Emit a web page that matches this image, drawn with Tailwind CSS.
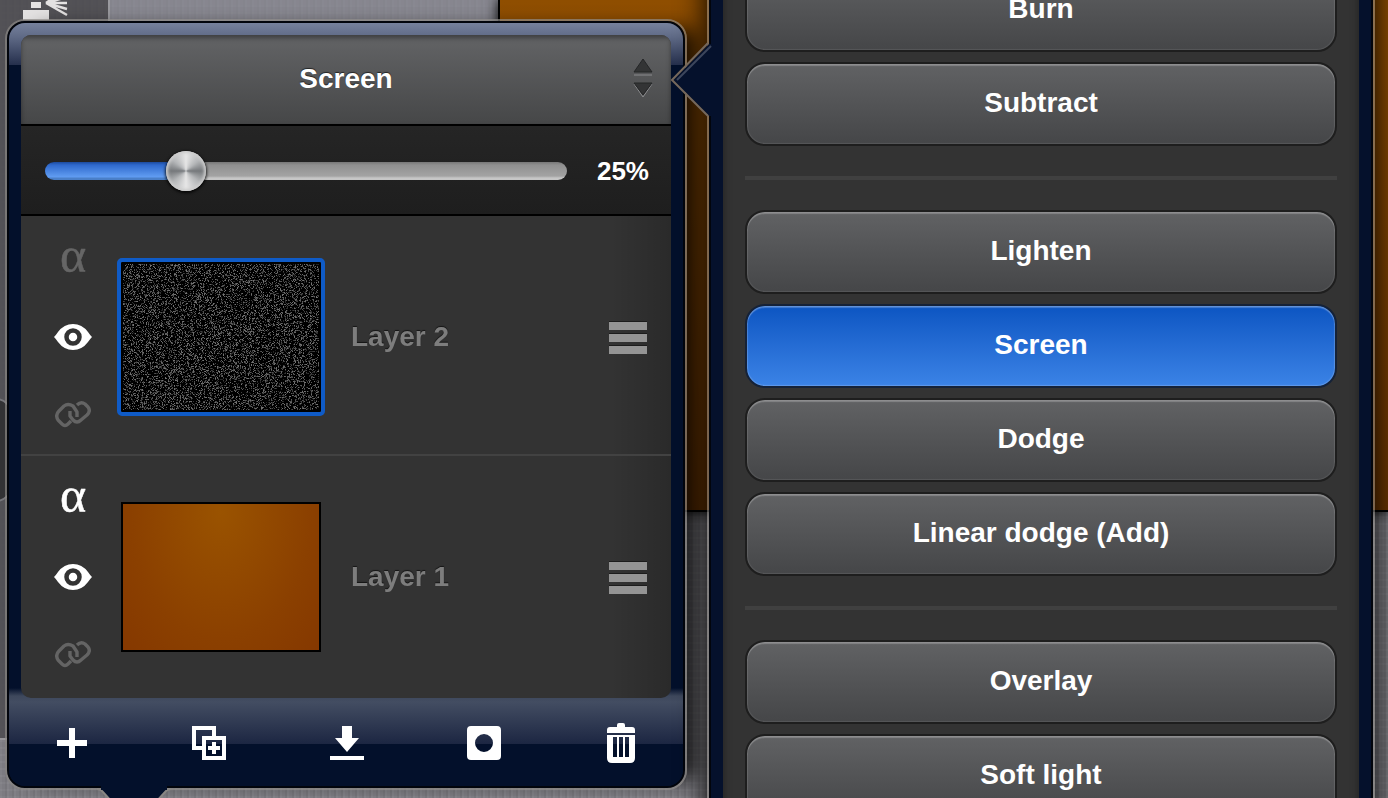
<!DOCTYPE html>
<html lang="en">
<head>
    <meta charset="UTF-8">
    <meta name="viewport" content="width=device-width, initial-scale=1.0">
    <title>Layers</title>
    <script src="https://cdn.jsdelivr.net/npm/@tailwindcss/browser@4"></script>
</head>
<body class="relative h-screen overflow-hidden bg-[#7c7b81] font-['Liberation_Sans',Arial,sans-serif] font-bold text-white">

    <!-- Workspace behind the popovers -->
    <div class="absolute inset-0 flex bg-[repeating-linear-gradient(90deg,#ffffff0a_0_2px,#0000_2px_5px,#0000000d_5px_7px),repeating-linear-gradient(0deg,#ffffff0a_0_2px,#0000_2px_7px)]" aria-hidden="true">
        <div class="flex w-[110px] flex-col">
            <div class="flex-1 border-r-2 border-[#9a9a9f] bg-[#4e4d51]/90">
                <svg class="ml-5 h-5 w-12" viewBox="0 0 48 20">
                    <path fill="#e4e2e2" d="M11 2h10v6H11zM3 10h26v10H3z"/>
                    <path stroke="#e4e2e2" stroke-width="2.5" fill="none" d="M26 3L47 -3M26 3H47M26 3L47 9M26 3L47 15M26 3L36 -4"/>
                </svg>
            </div>
            <div class="h-[60px] border-t-2 border-[#98979b]"></div>
        </div>
        <div class="flex w-[388px] flex-col">
            <div class="h-[512px] bg-[#8b8c96]/70"></div>
        </div>
        <div class="h-[512px] flex-1 border-b-2 border-l-2 border-black bg-linear-to-b from-[#8f4e00] to-[#6a3400] shadow-[0_0_12px_#000]"></div>
    </div>
    <div class="absolute -left-[92px] top-[398px] size-[104px] rounded-[16px] border-2 border-[#77777b] bg-[#323234]"></div>

    <main class="relative grid grid-cols-[682fr_668fr] items-start gap-5 pl-[5px] pr-[13px]">

        <!-- Layers popover -->
        <section class="relative mt-[19px] rounded-[20px] border-2 border-[#8a8784]/70 shadow-[20px_0_20px_-10px_#000c]">
            <div class="rounded-[18px] border-2 border-[#02050c] bg-[#03102b] bg-[linear-gradient(#76819c,#5f6a86_14px,#252f4c_42px,#0000_42px)] px-3 pt-3">
                <div class="relative z-10 overflow-hidden rounded-[10px] bg-[#333]">
                    <div class="relative h-[91px] border-b-2 border-black bg-linear-to-b from-[#636466] to-[#464748] shadow-[inset_0_3px_5px_#0006]">
                        <select aria-label="Blend mode" class="size-full appearance-none pb-[2px] text-center text-[28px] [text-align-last:center] text-shadow-[0_-1px_1px_#0009]">
                            <option>Screen</option>
                            <option>Burn</option>
                            <option>Subtract</option>
                            <option>Lighten</option>
                            <option>Dodge</option>
                            <option>Linear dodge (Add)</option>
                            <option>Overlay</option>
                            <option>Soft light</option>
                        </select>
                        <svg class="pointer-events-none absolute right-[17px] top-6 h-10 w-[22px]" viewBox="0 0 22 40">
                            <path d="M2 15H20M2 24H20L11 37Z" stroke="#8a8b8d" stroke-width="1" transform="translate(0 1)" fill="none"/>
                            <path fill="#333435" stroke="#252627" stroke-width="1" d="M11 0L20 13H2ZM2 24H20L11 36Z"/>
                        </svg>
                    </div>

                    <div class="flex h-[90px] items-center gap-7 border-b-2 border-black bg-linear-to-b from-[#252525] to-[#1e1e1e] pl-6 pr-[22px] pt-[2px]">
                        <input id="opacity" type="range" min="0" max="100" value="25" aria-label="Opacity"
                            class="h-10 min-w-0 flex-1 appearance-none bg-transparent
                            [&::-webkit-slider-runnable-track]:h-[18px] [&::-webkit-slider-runnable-track]:rounded-full
                            [&::-webkit-slider-runnable-track]:bg-[linear-gradient(#1c4a9c,#2f69cc_3px,#619df2_15px,#4a7fc8_16px),linear-gradient(#777,#909090_3px,#a3a3a3_14px,#c6c6c6_16px)]
                            [&::-webkit-slider-runnable-track]:bg-[length:27%_100%,100%_100%] [&::-webkit-slider-runnable-track]:bg-no-repeat
                            [&::-webkit-slider-thumb]:-mt-[11px] [&::-webkit-slider-thumb]:size-10 [&::-webkit-slider-thumb]:appearance-none [&::-webkit-slider-thumb]:rounded-full
                            [&::-webkit-slider-thumb]:bg-[conic-gradient(#e6e6e6,#b4b6b8_50deg,#75787b_90deg,#b4b6b8_130deg,#e6e6e6_180deg,#b4b6b8_230deg,#75787b_270deg,#b4b6b8_310deg,#e6e6e6)]
                            [&::-webkit-slider-thumb]:shadow-[0_1px_3px_1px_#000c,inset_0_0_3px_2px_#ccc]">
                        <output for="opacity" class="w-[54px] text-right text-[26px]">25%</output>
                    </div>

                    <ul class="bg-[linear-gradient(to_left,#0000002e,#0000_60px)] pb-[2px]">
                        <li class="flex h-60 items-center border-b-2 border-[#424242] pl-8 pr-6 pt-1">
                            <div class="flex h-[200px] w-10 flex-col items-center justify-between">
                                <button aria-label="Alpha lock" class="flex h-11 w-10 items-center justify-center pb-2 font-['Liberation_Serif',serif] text-[50px] font-normal leading-none text-[#666] [-webkit-text-stroke:0.5px_#666]">α</button>
                                <button aria-label="Visibility" class="flex h-11 w-10 items-center justify-center">
                                    <svg class="h-[26px] w-[38px]" viewBox="0 0 38 26"><path fill="#fff" d="M0 13Q2 11 4 8Q10 0 19 0T34 8Q36 11 38 13Q36 15 34 18Q28 26 19 26T4 18Q2 15 0 13Z"/><circle cx="19" cy="13" r="6.5" fill="#fff" stroke="#333" stroke-width="4.5"/></svg>
                                </button>
                                <button aria-label="Link" class="flex h-11 w-10 items-center justify-center pb-[2px]">
                                    <svg class="h-7 w-9" viewBox="0 0 36 28" fill="none" stroke="#646464" stroke-width="3.4" stroke-linejoin="round"><path d="M22 17V12L18 6Q13 3 9 6L4 11Q0 15 3 20L7 24Q10 27 13 24L16 21"/><path d="M22 5Q26 1 30 4L33 7Q36 11 32 15L26 20Q22 24 18 20L15 16V11"/></svg>
                                </button>
                            </div>
                            <canvas id="noise" width="196" height="146" class="ml-7 h-[150px] w-[200px] rounded-[1px] border-2 border-black outline-4 outline-[#0f5bc7]"></canvas>
                            <span class="ml-[30px] flex-1 text-[28px] text-[#7d7d7d] text-shadow-[0_-1px_1px_#0009]">Layer 2</span>
                            <button aria-label="Reorder Layer 2" class="flex flex-col gap-1 pt-[2px]">
                                <span class="h-2 w-[38px] bg-[#949494] shadow-[0_-1px_0_#1c1c1c]"></span>
                                <span class="h-2 w-[38px] bg-[#949494] shadow-[0_-1px_0_#1c1c1c]"></span>
                                <span class="h-2 w-[38px] bg-[#949494] shadow-[0_-1px_0_#1c1c1c]"></span>
                            </button>
                        </li>
                        <li class="flex h-60 items-center border-b-2 border-transparent pl-8 pr-6 pt-1">
                            <div class="flex h-[200px] w-10 flex-col items-center justify-between">
                                <button aria-label="Alpha lock" class="flex h-11 w-10 items-center justify-center pb-2 font-['Liberation_Serif',serif] text-[50px] font-normal leading-none [-webkit-text-stroke:0.5px_#fff]">α</button>
                                <button aria-label="Visibility" class="flex h-11 w-10 items-center justify-center">
                                    <svg class="h-[26px] w-[38px]" viewBox="0 0 38 26"><path fill="#fff" d="M0 13Q2 11 4 8Q10 0 19 0T34 8Q36 11 38 13Q36 15 34 18Q28 26 19 26T4 18Q2 15 0 13Z"/><circle cx="19" cy="13" r="6.5" fill="#fff" stroke="#333" stroke-width="4.5"/></svg>
                                </button>
                                <button aria-label="Link" class="flex h-11 w-10 items-center justify-center pb-[2px]">
                                    <svg class="h-7 w-9" viewBox="0 0 36 28" fill="none" stroke="#646464" stroke-width="3.4" stroke-linejoin="round"><path d="M22 17V12L18 6Q13 3 9 6L4 11Q0 15 3 20L7 24Q10 27 13 24L16 21"/><path d="M22 5Q26 1 30 4L33 7Q36 11 32 15L26 20Q22 24 18 20L15 16V11"/></svg>
                                </button>
                            </div>
                            <div class="ml-7 h-[150px] w-[200px] border-2 border-black bg-[radial-gradient(ellipse_at_50%_5%,#9a5300,#8b4000_65%,#853800)]"></div>
                            <span class="ml-[30px] flex-1 text-[28px] text-[#7d7d7d] text-shadow-[0_-1px_1px_#0009]">Layer 1</span>
                            <button aria-label="Reorder Layer 1" class="flex flex-col gap-1 pt-[2px]">
                                <span class="h-2 w-[38px] bg-[#949494] shadow-[0_-1px_0_#1c1c1c]"></span>
                                <span class="h-2 w-[38px] bg-[#949494] shadow-[0_-1px_0_#1c1c1c]"></span>
                                <span class="h-2 w-[38px] bg-[#949494] shadow-[0_-1px_0_#1c1c1c]"></span>
                            </button>
                        </li>
                    </ul>
                </div>

                <div class="-mx-3 -mt-[10px] flex h-[98px] items-center justify-between rounded-b-[16px] bg-[linear-gradient(#03102b,#3e485c_8px,#434d62_14px,#1c2642_56px,#03102b_56px)] pl-[43px] pr-[42px] pt-3">
                    <button aria-label="Add layer" class="flex size-10 items-center justify-center">
                        <svg class="size-[30px]" viewBox="0 0 30 30" fill="#fff"><path d="M12 0h6v12h12v6H18v12h-6V18H0v-6h12z"/></svg>
                    </button>
                    <button aria-label="Duplicate layer" class="flex size-10 items-center justify-center">
                        <svg class="size-[34px]" viewBox="0 0 34 34" fill="none" stroke="#fff" stroke-width="4"><path d="M10 22H2V2H22V10M12 12H32V32H12ZM22 16V28M16 22H28"/></svg>
                    </button>
                    <button aria-label="Merge down" class="flex size-10 items-center justify-center">
                        <svg class="size-[34px]" viewBox="0 0 34 34" fill="#fff"><path d="M12 0h10v12h7L17 26 5 12h7zM0 30h34v4H0z"/></svg>
                    </button>
                    <button aria-label="Layer mask" class="flex size-10 items-center justify-center">
                        <svg class="size-[34px]" viewBox="0 0 34 34" fill="#fff" fill-rule="evenodd"><path d="M4 0H30Q34 0 34 4V30Q34 34 30 34H4Q0 34 0 30V4Q0 0 4 0ZM17 8a9 9 0 1 0 0 18a9 9 0 1 0 0-18Z"/></svg>
                    </button>
                    <button aria-label="Delete layer" class="flex size-10 items-center justify-center">
                        <svg class="h-10 w-7" viewBox="0 0 28 40" fill="#fff" fill-rule="evenodd"><path d="M0 10V7Q0 4 3 4H10V2Q10 0 12 0H16Q18 0 18 2V4H25Q28 4 28 7V10ZM0 12H28V35Q28 40 23 40H5Q0 40 0 35ZM6 14V34H10V14ZM12 14V34H16V14ZM18 14V34H22V14Z"/></svg>
                    </button>
                </div>
            </div>
            <svg class="absolute -bottom-[14px] left-[89px] h-4 w-[76px]" viewBox="0 0 76 16">
                <path fill="#03102b" stroke="#8a8784" stroke-width="2" d="M1 3Q4 3 6 5L18 18H58L70 5Q72 3 75 3"/>
                <path fill="#03102b" d="M5 0H71V4H5Z"/>
            </svg>
        </section>

        <!-- Blend mode popover -->
        <section class="relative -mt-[70px] rounded-[20px] border-2 border-[#8a8784]/60 shadow-[0_2px_30px_#000]">
            <div class="rounded-[18px] border-2 border-[#02050c] bg-[#05112c] p-3">
                <div class="flex flex-col gap-[10px] rounded-[10px] bg-[#333] p-[22px] text-[28px] shadow-[inset_0_0_8px_#0006] text-shadow-[0_-1px_1px_#0009]">
                    <button class="h-[84px] rounded-[20px] border-2 border-[#1e1e1e] bg-linear-to-b from-[#616264] to-[#454648] pb-[2px] shadow-[inset_0_2px_1px_#ffffff38,inset_0_0_1px_1px_#ffffff18]">Burn</button>
                    <button class="h-[84px] rounded-[20px] border-2 border-[#1e1e1e] bg-linear-to-b from-[#616264] to-[#454648] pb-[2px] shadow-[inset_0_2px_1px_#ffffff38,inset_0_0_1px_1px_#ffffff18]">Subtract</button>
                    <hr class="my-5 border-t-4 border-[#404040]">
                    <button class="h-[84px] rounded-[20px] border-2 border-[#1e1e1e] bg-linear-to-b from-[#616264] to-[#454648] pb-[2px] shadow-[inset_0_2px_1px_#ffffff38,inset_0_0_1px_1px_#ffffff18]">Lighten</button>
                    <button aria-pressed="true" class="h-[84px] rounded-[20px] border-2 border-[#152238] bg-linear-to-b from-[#0b55c2] to-[#3b83e6] pb-[2px] shadow-[inset_0_2px_1px_#ffffff38,inset_0_0_1px_1px_#ffffff30]">Screen</button>
                    <button class="h-[84px] rounded-[20px] border-2 border-[#1e1e1e] bg-linear-to-b from-[#616264] to-[#454648] pb-[2px] shadow-[inset_0_2px_1px_#ffffff38,inset_0_0_1px_1px_#ffffff18]">Dodge</button>
                    <button class="h-[84px] rounded-[20px] border-2 border-[#1e1e1e] bg-linear-to-b from-[#616264] to-[#454648] pb-[2px] shadow-[inset_0_2px_1px_#ffffff38,inset_0_0_1px_1px_#ffffff18]">Linear dodge (Add)</button>
                    <hr class="my-5 border-t-4 border-[#404040]">
                    <button class="h-[84px] rounded-[20px] border-2 border-[#1e1e1e] bg-linear-to-b from-[#616264] to-[#454648] pb-[2px] shadow-[inset_0_2px_1px_#ffffff38,inset_0_0_1px_1px_#ffffff18]">Overlay</button>
                    <button class="h-[84px] rounded-[20px] border-2 border-[#1e1e1e] bg-linear-to-b from-[#616264] to-[#454648] pb-[2px] shadow-[inset_0_2px_1px_#ffffff38,inset_0_0_1px_1px_#ffffff18]">Soft light</button>
                </div>
            </div>
            <svg class="absolute -left-[38px] top-[110px] h-[76px] w-[42px]" viewBox="0 0 42 76">
                <path fill="#05112c" d="M42 2L38 2L2 38L38 74H42Z"/>
                <path fill="none" stroke="#75685c" stroke-width="2" d="M37 1L1 38L37 74"/>
                <path fill="none" stroke="#3c465c" stroke-width="2" d="M40 4L6 38"/>
            </svg>
        </section>
    </main>

    <script>
        // Speckle thumbnail for the noise layer
        const canvas = document.getElementById("noise");
        const ctx = canvas.getContext("2d");
        const image = ctx.createImageData(canvas.width, canvas.height);

        for (let i = 0; i < image.data.length; i += 4) {
            const level = Math.random() < 0.36 ? 30 + Math.random() * 90 : 0;
            image.data[i] = level;
            image.data[i + 1] = level;
            image.data[i + 2] = level;
            image.data[i + 3] = 255;
        }
        ctx.putImageData(image, 0, 0);

        const opacity = document.getElementById("opacity");
        opacity.addEventListener("input", () => {
            document.querySelector("output").textContent = `${opacity.value}%`;
        });
    </script>
</body>
</html>
